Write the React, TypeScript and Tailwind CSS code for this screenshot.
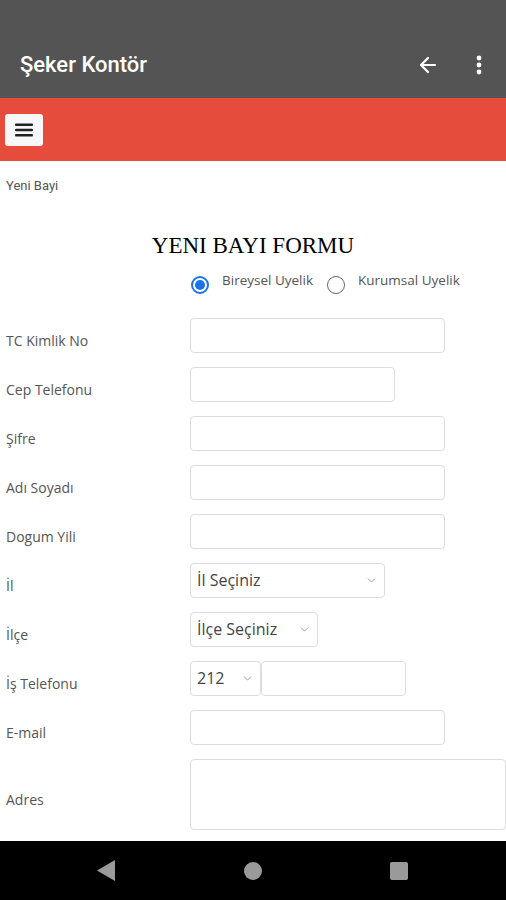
import React from "react";
import { ArrowLeft, ChevronDown } from "lucide-react";

const label = "w-[190px] shrink-0 pl-[6px] pt-[10px] text-[14px] text-[#555]";
const box = "h-[35px] rounded-[4px] border border-[#ddd] bg-white";

const Row = ({ name, children }: { name: string; children: React.ReactNode }) => (
  <div className="flex items-center">
    <div className={label}>{name}</div>
    {children}
  </div>
);

const Select = ({ text, w }: { text: string; w: string }) => (
  <div className={`${box} ${w} flex items-center justify-between pl-[6px] pr-[6px] text-[16px] text-[#444]`}>
    <span>{text}</span>
    <ChevronDown size={13} strokeWidth={1.5} className="text-[#888]" />
  </div>
);

export default function App() {
  return (
    <div
      className="flex h-[900px] w-[506px] flex-col overflow-hidden bg-white"
      style={{ fontFamily: "'Open Sans', Roboto, sans-serif" }}
    >
      <header className="flex h-[98px] shrink-0 items-end bg-[#545454] pb-[20px] pl-[20px] pr-[14px]">
        <h1 className="flex-1 font-['Roboto',sans-serif] text-[22px] font-medium leading-[26px] text-white">
          Şeker Kontör
        </h1>
        <ArrowLeft size={24} strokeWidth={2.2} className="mb-[1px] mr-[36px] text-white" />
        <svg width="6" height="20" viewBox="0 0 6 20" className="mb-[3px] mr-[10px]">
          <circle cx="3" cy="3" r="2.4" fill="white" />
          <circle cx="3" cy="10" r="2.4" fill="white" />
          <circle cx="3" cy="17" r="2.4" fill="white" />
        </svg>
      </header>

      <div className="flex h-[63px] shrink-0 items-center bg-[#e54c3c] pl-[5px]">
        <div className="flex h-[32px] w-[38px] items-center justify-center rounded-[3px] bg-[#f7f7f7]">
          <svg width="18" height="14" viewBox="0 0 18 14">
            <rect x="0" y="0.5" width="18" height="2.4" rx="1" fill="#222" />
            <rect x="0" y="5.8" width="18" height="2.4" rx="1" fill="#222" />
            <rect x="0" y="11.1" width="18" height="2.4" rx="1" fill="#222" />
          </svg>
        </div>
      </div>

      <main className="min-h-0 flex-1 overflow-hidden">
        <div className="pl-[6px] pt-[15px] font-['Roboto',sans-serif] text-[13px] text-[#555]">Yeni Bayi</div>

        <h2 className="mt-[37px] text-center font-['Liberation_Serif',serif] text-[23px] leading-[26px] text-black">
          YENI BAYI FORMU
        </h2>

        <div className="mt-[11px] flex items-start pl-[191px] text-[13.5px] text-[#555]">
          <span className="mt-[6px] flex h-[18px] w-[18px] items-center justify-center rounded-full border-2 border-[#1a73e8]">
            <span className="h-[10px] w-[10px] rounded-full bg-[#1a73e8]" />
          </span>
          <span className="ml-[13px]">Bireysel Uyelik</span>
          <span className="ml-[14px] mt-[6px] h-[18px] w-[18px] rounded-full border border-[#666]" />
          <span className="ml-[13px]">Kurumsal Uyelik</span>
        </div>

        <div className="mt-[24px] flex flex-col gap-[14px]">
          <Row name="TC Kimlik No">
            <div className={`${box} w-[255px]`} />
          </Row>
          <Row name="Cep Telefonu">
            <div className={`${box} w-[205px]`} />
          </Row>
          <Row name="Şifre">
            <div className={`${box} w-[255px]`} />
          </Row>
          <Row name="Adı Soyadı">
            <div className={`${box} w-[255px]`} />
          </Row>
          <Row name="Dogum Yili">
            <div className={`${box} w-[255px]`} />
          </Row>
          <Row name="İl">
            <Select text="İl Seçiniz" w="w-[195px]" />
          </Row>
          <Row name="İlçe">
            <Select text="İlçe Seçiniz" w="w-[128px]" />
          </Row>
          <Row name="İş Telefonu">
            <div className="flex">
              <Select text="212" w="w-[71px]" />
              <div className={`${box} w-[145px]`} />
            </div>
          </Row>
          <Row name="E-mail">
            <div className={`${box} w-[255px]`} />
          </Row>
          <div className="flex items-center">
            <div className={label}>Adres</div>
            <div className="h-[71px] flex-1 rounded-[4px] border border-[#ddd] bg-white" />
          </div>
        </div>
      </main>

      <nav className="flex h-[59px] shrink-0 items-center bg-black">
        <div className="flex w-full items-center justify-between pl-[97px] pr-[98px]">
          <svg width="18" height="21" viewBox="0 0 18 21">
            <polygon points="18,0 18,21 0,10.5" fill="#9a9a9a" />
          </svg>
          <span className="h-[18px] w-[18px] rounded-full bg-[#9a9a9a]" />
          <span className="h-[18px] w-[18px] rounded-[2px] bg-[#9a9a9a]" />
        </div>
      </nav>
    </div>
  );
}
